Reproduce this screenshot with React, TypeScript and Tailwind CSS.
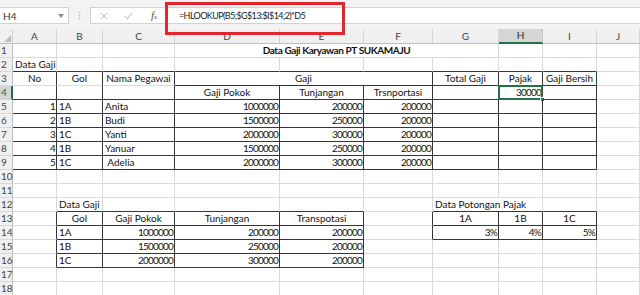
import React from 'react';

type Align = 'l' | 'c' | 'r';
type Cell = { t?: string; a?: Align; span?: number; bold?: boolean; num?: boolean; sel?: boolean };

const e = (n = 1): Cell[] => Array.from({ length: n }, () => ({}));
const L = (t: string): Cell => ({ t, a: 'l' });
const C = (t: string): Cell => ({ t, a: 'c' });
const N = (t: string): Cell => ({ t, a: 'r', num: true });

const dataRow = (no: string, gol: string, nama: string, gp: string, tj: string, tr: string): Cell[] => [
  N(no),
  L(gol),
  L(nama),
  N(gp),
  N(tj),
  N(tr),
  ...e(4),
];

const rows: Cell[][] = [
  [...e(3), { t: 'Data Gaji Karyawan PT SUKAMAJU', a: 'c', span: 4, bold: true }, ...e(3)],
  [L('Data Gaji'), ...e(9)],
  [C('No'), C('Gol'), C('Nama Pegawai'), { t: 'Gaji', a: 'c', span: 3 }, C('Total Gaji'), C('Pajak'), C('Gaji Bersih'), {}],
  [...e(3), C('Gaji Pokok'), C('Tunjangan'), C('Trsnportasi'), {}, { t: '30000', a: 'r', num: true, sel: true }, ...e(2)],
  dataRow('1', '1A', 'Anita', '1000000', '200000', '200000'),
  dataRow('2', '1B', 'Budi', '1500000', '250000', '200000'),
  dataRow('3', '1C', 'Yanti', '2000000', '300000', '200000'),
  dataRow('4', '1B', 'Yanuar', '1500000', '250000', '200000'),
  dataRow('5', '1C', '\u00A0Adelia', '2000000', '300000', '200000'),
  e(10),
  e(10),
  [{}, L('Data Gaji'), ...e(4), { t: 'Data Potongan Pajak', a: 'l', span: 2 }, ...e(2)],
  [{}, C('Gol'), C('Gaji Pokok'), C('Tunjangan'), C('Transpotasi'), {}, C('1A'), C('1B'), C('1C'), {}],
  [{}, L('1A'), N('1000000'), N('200000'), N('200000'), {}, N('3%'), N('4%'), N('5%'), {}],
  [{}, L('1B'), N('1500000'), N('250000'), N('200000'), ...e(5)],
  [{}, L('1C'), N('2000000'), N('300000'), N('200000'), ...e(5)],
  e(10),
  e(10),
];

const colHeaders = ['A', 'B', 'C', 'D', 'E', 'F', 'G', 'H', 'I', 'J'];

function boxed(r: number, c: number): boolean {
  if (r >= 3 && r <= 9 && c >= 0 && c <= 8) return true;
  if (r >= 13 && r <= 16 && c >= 1 && c <= 4) return true;
  if (r >= 13 && r <= 14 && c >= 6 && c <= 8) return true;
  return false;
}

const spanClass: Record<number, string> = { 1: '', 2: 'col-span-2', 3: 'col-span-3', 4: 'col-span-4' };
const alignClass: Record<Align, string> = {
  l: 'justify-start pl-[2px]',
  c: 'justify-center',
  r: 'justify-end pr-[1px]',
};

function TopBar() {
  return (
    <div className="h-[29px] bg-[#f3f3f3] flex items-start pt-[7px]">
      <div className="w-[69px] h-[17px] bg-white border border-l-0 border-[#d2d2d2] flex items-center justify-between pl-[3px] pr-[4px]">
        <span className="text-[10px] leading-[12px] text-[#333]">H4</span>
        <svg width="6" height="4" viewBox="0 0 6 4">
          <path d="M0 0h6L3 4z" fill="#8a8a8a" />
        </svg>
      </div>
      <div className="w-[21px] h-[17px] flex items-center justify-center">
        <svg width="3" height="9" viewBox="0 0 3 9">
          <circle cx="1.5" cy="1.5" r="0.9" fill="#c4c4c4" />
          <circle cx="1.5" cy="4.5" r="0.9" fill="#c4c4c4" />
          <circle cx="1.5" cy="7.5" r="0.9" fill="#c4c4c4" />
        </svg>
      </div>
      <div className="flex-1 h-[17px] bg-white border border-r-0 border-[#d2d2d2] flex items-center">
        <svg className="ml-[9px]" width="8" height="8" viewBox="0 0 8 8">
          <path d="M1 1L7 7M7 1L1 7" stroke="#a8a8a8" strokeWidth="0.9" fill="none" />
        </svg>
        <svg className="ml-[16px]" width="9" height="8" viewBox="0 0 9 8">
          <path d="M1 4.2L3.4 6.8L8 1" stroke="#a8a8a8" strokeWidth="0.9" fill="none" />
        </svg>
        <span className="ml-[18px] w-[9px] text-[11px] leading-[12px] italic text-[#555] font-['Liberation_Serif',serif]">
          f<span className="text-[7px]">x</span>
        </span>
        <span className="ml-[19px] text-[9px] leading-[12px] tracking-[-0.6px] text-[#1a1a1a] whitespace-nowrap">
          =HLOOKUP(B5;$G$13:$I$14;2)*D5
        </span>
      </div>
    </div>
  );
}

function Sheet() {
  return (
    <div className="grid grid-cols-[13px_44px_46px_72px_105px_84px_69px_66px_44px_54px_43px] grid-rows-[15px_repeat(18,14px)]">
      <div className="relative bg-[#f0f0f0] border-r border-b border-r-[#cfcfcf] border-b-[#bdbdbd]">
        <svg className="absolute right-[1px] bottom-[1px]" width="7" height="7" viewBox="0 0 7 7">
          <path d="M7 0V7H0z" fill="#bdbdbd" />
        </svg>
      </div>
      {colHeaders.map((h) =>
        h === 'H' ? (
          <div
            key={h}
            className="flex items-center justify-center bg-[#d5d5d5] border-r border-r-[#c4c4c4] border-b-2 border-b-[#217346] text-[10px] leading-[11px] text-[#2a2a2a]"
          >
            {h}
          </div>
        ) : (
          <div
            key={h}
            className="flex items-center justify-center bg-[#f0f0f0] border-r border-b border-r-[#d4d4d4] border-b-[#bdbdbd] text-[10px] leading-[11px] text-[#444]"
          >
            {h}
          </div>
        )
      )}
      {rows.map((cells, i) => {
        const r = i + 1;
        let c = 0;
        return (
          <React.Fragment key={r}>
            {r === 4 ? (
              <div className="flex items-center pl-[1px] bg-[#d5d5d5] border-r-2 border-r-[#217346] border-b border-b-[#d4d4d4] text-[10px] leading-[11px] text-[#217346]">
                {r}
              </div>
            ) : (
              <div className="flex items-center pl-[1px] bg-[#f0f0f0] border-r border-b border-r-[#bdbdbd] border-b-[#d9d9d9] text-[10px] leading-[11px] text-[#444]">
                {r}
              </div>
            )}
            {cells.map((cell, j) => {
              const span = cell.span ?? 1;
              const c0 = c;
              c += span;
              const last = c0 + span - 1;
              const rightDark = boxed(r, last) || boxed(r, last + 1);
              let bottomDark = false;
              for (let x = c0; x <= last; x++) if (boxed(r, x) || boxed(r + 1, x)) bottomDark = true;
              if (r === 3 && c0 <= 2) bottomDark = false;
              const cls = [
                'relative flex items-end whitespace-nowrap border-r border-b text-[10px] leading-[11px] text-[#111]',
                rightDark ? 'border-r-[#363636]' : 'border-r-[#dadada]',
                bottomDark ? 'border-b-[#363636]' : 'border-b-[#dadada]',
                spanClass[span],
                cell.a ? alignClass[cell.a] : '',
                cell.bold ? 'font-bold tracking-[-0.4px]' : '',
                cell.num ? 'tracking-[-0.8px]' : '',
              ].join(' ');
              return (
                <div key={j} className={cls}>
                  {cell.t && <span className="pb-[1px]">{cell.t}</span>}
                  {cell.sel && (
                    <div className="absolute -left-[1px] -top-[1px] -right-[1px] -bottom-[1px] border-2 border-[#217346]">
                      <div className="absolute -right-[4px] -bottom-[4px] w-[5px] h-[5px] bg-[#217346] border border-white" />
                    </div>
                  )}
                </div>
              );
            })}
          </React.Fragment>
        );
      })}
    </div>
  );
}

export default function App() {
  return (
    <div className="relative w-[640px] h-[295px] overflow-hidden bg-white font-['Lato',sans-serif]">
      <TopBar />
      <Sheet />
      <div className="absolute left-[165px] top-[2px] w-[180px] h-[33px] border-[3px] border-[#e2262d]" />
    </div>
  );
}
